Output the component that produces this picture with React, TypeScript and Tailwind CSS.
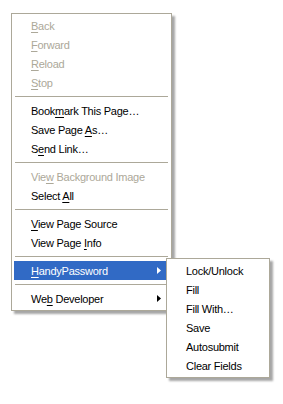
import React from 'react';

type Item =
  | { sep: true }
  | { label: string; key?: number; disabled?: boolean; sub?: boolean; active?: boolean };

// main context menu entries, key = index of the access-key letter
const mainItems: Item[] = [
  { label: 'Back', key: 0, disabled: true },
  { label: 'Forward', key: 0, disabled: true },
  { label: 'Reload', key: 0, disabled: true },
  { label: 'Stop', key: 0, disabled: true },
  { sep: true },
  { label: 'Bookmark This Page…', key: 4 },
  { label: 'Save Page As…', key: 10 },
  { label: 'Send Link…', key: 1 },
  { sep: true },
  { label: 'View Background Image', key: 3, disabled: true },
  { label: 'Select All', key: 7 },
  { sep: true },
  { label: 'View Page Source', key: 0 },
  { label: 'View Page Info', key: 10 },
  { sep: true },
  { label: 'HandyPassword', key: 0, sub: true, active: true },
  { sep: true },
  { label: 'Web Developer', key: 2, sub: true },
];

const subItems = ['Lock/Unlock', 'Fill', 'Fill With…', 'Save', 'Autosubmit', 'Clear Fields'];

const Arrow = ({ white }: { white?: boolean }) => (
  <svg width="4" height="7" viewBox="0 0 4 7" className="absolute right-[8px] top-[6px]">
    <polygon points="0,0 4,3.5 0,7" fill={white ? '#ffffff' : '#000000'} />
  </svg>
);

const Label = ({ text, k }: { text: string; k?: number }) => {
  if (k === undefined) return <>{text}</>;
  return (
    <>
      {text.slice(0, k)}
      <span className="underline underline-offset-[2px]">{text[k]}</span>
      {text.slice(k + 1)}
    </>
  );
};

export default function App() {
  return (
    <div className="relative min-h-screen bg-white font-['Liberation_Sans',Arial,sans-serif] text-[11px] tracking-[-0.25px]">
      <div className="pt-[13px] pl-[11px]">
        <div className="w-[161px] border border-[#aca899] bg-white p-[2px] shadow-[3px_3px_2px_rgba(0,0,0,0.35)]">
          {mainItems.map((it, i) =>
            'sep' in it ? (
              <div key={i} className="flex h-[9px] items-center px-[1px]">
                <div className="h-px w-full bg-[#aca899]" />
              </div>
            ) : (
              <div
                key={i}
                className={
                  'relative h-[19px] whitespace-nowrap pt-px pl-[17px] leading-[18px] ' +
                  (it.active ? 'bg-[#316ac5] text-white' : it.disabled ? 'text-[#aca899]' : 'text-black')
                }
              >
                <Label text={it.label} k={it.key} />
                {it.sub && <Arrow white={it.active} />}
              </div>
            )
          )}
        </div>
      </div>

      <div className="absolute left-[166px] top-[258px] w-[104px] border border-[#aca899] bg-white p-[2px] shadow-[3px_3px_2px_rgba(0,0,0,0.35)]">
        {subItems.map((s) => (
          <div key={s} className="h-[19px] whitespace-nowrap pt-px pl-[17px] leading-[18px] text-black">
            {s}
          </div>
        ))}
      </div>
    </div>
  );
}
